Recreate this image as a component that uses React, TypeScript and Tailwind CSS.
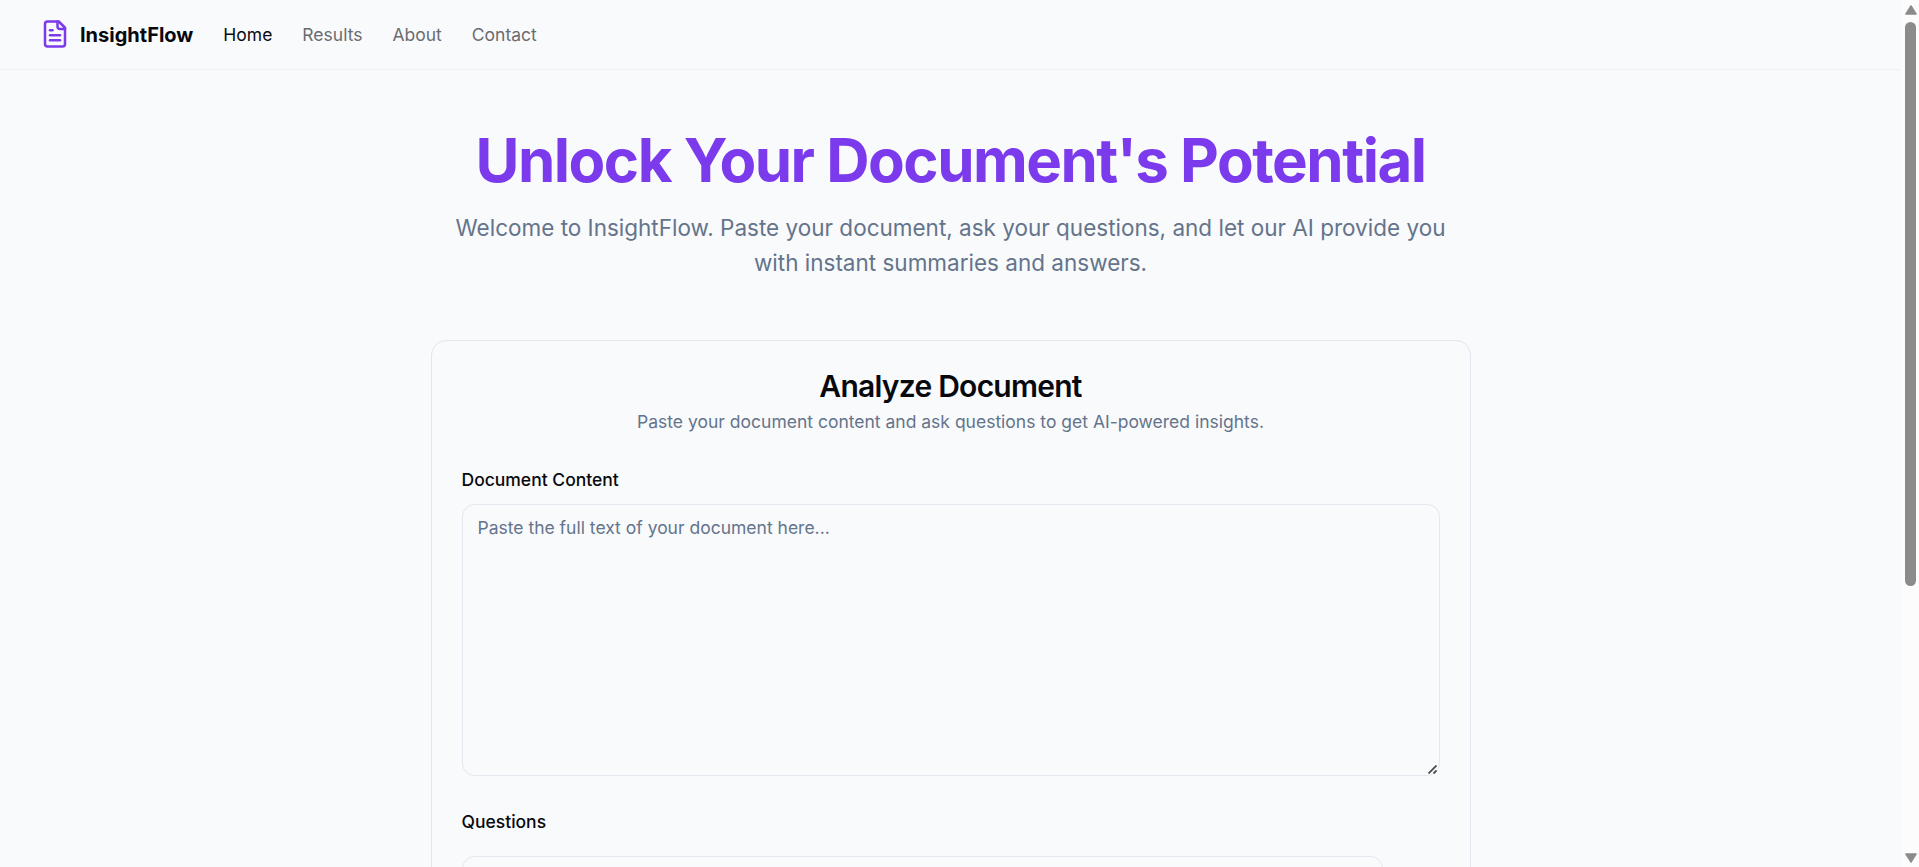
const links = ["Results", "About", "Contact"];

function Logo() {
  return (
    <svg className="-mt-px size-[30px] text-[#7c3aed]" viewBox="0 0 24 24" fill="none" stroke="currentColor" strokeWidth="2" strokeLinecap="round" strokeLinejoin="round">
      <path d="M15 2H6a2 2 0 0 0-2 2v16a2 2 0 0 0 2 2h12a2 2 0 0 0 2-2V7Z" />
      <path d="M14 2v4a2 2 0 0 0 2 2h4" />
      <path d="M10 9H8" />
      <path d="M16 13H8" />
      <path d="M16 17H8" />
    </svg>
  );
}

function Header() {
  return (
    <header className="flex h-[70px] items-center border-b border-[#eef1f6] px-10">
      <a className="mr-[30px] flex items-center gap-2.5">
        <Logo />
        <span className="text-[20px] leading-[30px] font-bold">InsightFlow</span>
      </a>
      <nav className="flex items-center gap-[30px] text-[17.5px] leading-[25px]">
        <a className="text-[#0a0b10]">Home</a>
        {links.map((link) => (
          <a key={link} className="text-[#6b6c70]">{link}</a>
        ))}
      </nav>
    </header>
  );
}

function Scrollbar() {
  return (
    <div className="flex h-full w-[18px] shrink-0 flex-col items-center bg-[#fcfcfc] pt-[5px] pb-1">
      <svg className="ml-px h-[10px] w-3 shrink-0" viewBox="0 0 12 10" fill="#8b8b8b">
        <path d="M6 0.8 11.2 9H0.8Z" stroke="#8b8b8b" strokeWidth="1.4" strokeLinejoin="round" />
      </svg>
      <div className="mt-[7px] h-[564px] w-[11px] rounded-full bg-[#8b8b8b]" />
      <svg className="mt-auto ml-px h-[10px] w-3 shrink-0" viewBox="0 0 12 10" fill="#8b8b8b">
        <path d="M6 9.2 0.8 1H11.2Z" stroke="#8b8b8b" strokeWidth="1.4" strokeLinejoin="round" />
      </svg>
    </div>
  );
}

export default function App() {
  return (
    <div className="flex h-[867px] overflow-hidden bg-[#f9fafc] font-['Inter',sans-serif] text-[#08090d]">
      <div className="min-w-0 flex-1">
        <Header />
        <main className="mx-auto w-[1040px] pt-[60px]">
          <section className="mb-[60px] text-center">
            <h1 className="text-[60px] leading-[60px] font-bold tracking-tight text-[#7c3aed]">
              Unlock Your Document's Potential
            </h1>
            <p className="mx-auto mt-5 w-[1000px] text-[22.5px] leading-[35px] text-[#64748b]">
              Welcome to InsightFlow. Paste your document, ask your questions, and let our AI provide you with instant summaries and answers.
            </p>
          </section>
          <section className="h-[900px] rounded-[15px] border border-[#e2e6ee] p-[30px]">
            <div className="text-center">
              <h2 className="text-[30px] leading-[30px] font-semibold tracking-tight">Analyze Document</h2>
              <p className="mt-[7.5px] text-[17.5px] leading-[25px] text-[#64748b]">
                Paste your document content and ask questions to get AI-powered insights.
              </p>
            </div>
            <div className="relative mt-[30px]">
              <label className="block pt-[1.5px] pb-[8.5px] text-[17.5px] leading-[30px] font-medium">Document Content</label>
              <textarea
                className="block h-[272px] w-full resize-none rounded-[12.5px] border border-[#e2e8f0] px-[15px] py-2.5 text-[17.5px] leading-[25px] outline-none placeholder:text-[#64748b]"
                placeholder="Paste the full text of your document here..."
              />
              <svg className="absolute right-[3px] bottom-[2px] size-[9px]" viewBox="0 0 9 9" stroke="#4b4b4b" strokeWidth="1.8">
                <path d="M0.5 8.5 8.5 0.5M5.5 8.5 8.5 5.5" />
              </svg>
            </div>
            <div className="mt-[30px]">
              <label className="block pt-px pb-[19px] text-[17.5px] leading-[30px] font-medium">Questions</label>
              <input className="block h-[100px] w-[921px] rounded-[12.5px] border border-[#e2e8f0] px-[15px] outline-none" />
            </div>
          </section>
        </main>
      </div>
      <Scrollbar />
    </div>
  );
}
